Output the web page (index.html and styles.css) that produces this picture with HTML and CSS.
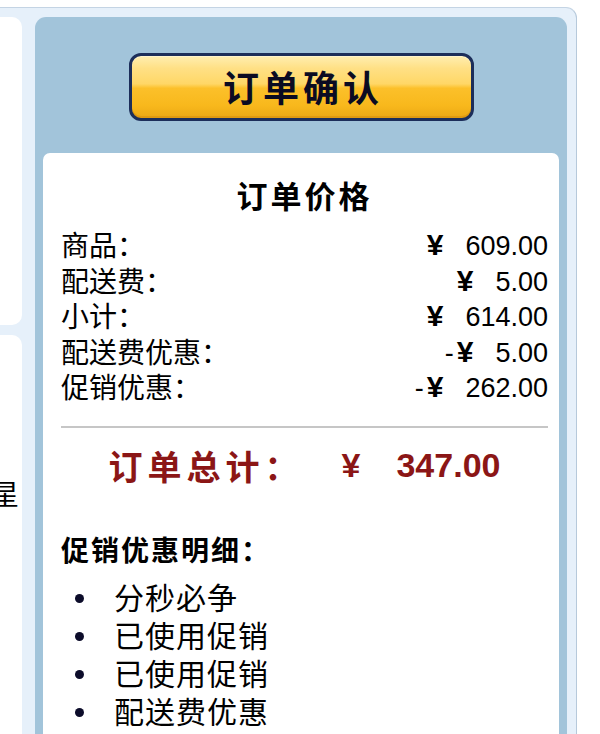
FILE: index.html
```html
<!DOCTYPE html>
<html lang="zh-CN">
<head>
<meta charset="utf-8">
<title>订单确认</title>
<link rel="stylesheet" href="styles.css">
</head>
<body>
<div class="frame">
  <div class="side">
    <div class="side-panel side-top"></div>
    <div class="side-panel side-bottom"><span class="cut">星</span></div>
  </div>
  <div class="panel">
    <div class="btn-row"><button class="confirm" type="button">订单确认</button></div>
    <div class="card">
      <h2 class="title">订单价格</h2>
      <div class="rows">
        <div class="row"><span class="label">商品：</span><span class="val"><span class="yen">¥</span>609.00</span></div>
        <div class="row"><span class="label">配送费：</span><span class="val"><span class="yen">¥</span>5.00</span></div>
        <div class="row"><span class="label">小计：</span><span class="val"><span class="yen">¥</span>614.00</span></div>
        <div class="row"><span class="label">配送费优惠：</span><span class="val">-<span class="yen yen-neg">¥</span>5.00</span></div>
        <div class="row"><span class="label">促销优惠：</span><span class="val">-<span class="yen yen-neg">¥</span>262.00</span></div>
      </div>
      <hr class="divider">
      <div class="total">
        <span class="total-label">订单总计：</span>
        <span class="total-yen">¥</span>
        <span class="total-num">347.00</span>
      </div>
      <h3 class="promo-head">促销优惠明细：</h3>
      <ul class="promo-list">
        <li>分秒必争</li>
        <li>已使用促销</li>
        <li>已使用促销</li>
        <li>配送费优惠</li>
      </ul>
    </div>
  </div>
</div>
</body>
</html>
```

FILE: styles.css
```css
html, body {
  margin: 0;
  padding: 0;
  background: #ffffff;
}

body {
  font-family: "Noto Sans CJK SC", "Liberation Sans", sans-serif;
  color: #000000;
  height: 734px;
  overflow: hidden;
}

.frame {
  margin-top: 7px;
  width: 577px;
  min-height: 800px;
  box-sizing: border-box;
  display: flex;
  gap: 13px;
  padding: 9px 9px 0 0;
  background: #e6f0fa;
  border-top: 1px solid #c4d4e4;
  border-right: 1px solid #b6c9db;
  border-top-right-radius: 11px;
}

.side {
  width: 22px;
  flex: none;
  display: flex;
  flex-direction: column;
  gap: 10px;
}

.side-panel {
  background: #ffffff;
}

.side-top {
  height: 308px;
  border-radius: 0 10px 10px 0;
}

.side-bottom {
  flex: 1;
  border-radius: 0 10px 0 0;
  display: flex;
  justify-content: flex-end;
  align-items: flex-start;
  padding: 140px 3px 0 0;
  overflow: hidden;
  font-size: 28px;
  line-height: 36px;
}

.cut {
  flex: none;
}

.panel {
  width: 532px;
  flex: none;
  box-sizing: border-box;
  background: #a2c4da;
  border-radius: 11px 11px 0 0;
  padding: 36px 8px 0;
  display: flex;
  flex-direction: column;
}

.btn-row {
  display: flex;
  justify-content: center;
}

.confirm {
  width: 345px;
  height: 68px;
  box-sizing: border-box;
  border: 3px solid #1c2e5a;
  border-radius: 12px;
  background: linear-gradient(to bottom, #ffeeb0 0%, #ffe085 20%, #ffd766 45%, #fcc02a 52%, #f8b81c 80%, #eca814 100%);
  box-shadow: inset 0 1px 0 #fff4cc, inset 0 -2px 0 #e09a10;
  font-family: "Noto Sans CJK SC", sans-serif;
  font-weight: 700;
  font-size: 36px;
  line-height: 1;
  letter-spacing: 4px;
  padding: 0 0 2px 4px;
  color: #0b0b22;
}

.card {
  margin-top: 32px;
  flex: 1;
  background: #ffffff;
  border-radius: 7px 7px 0 0;
  padding: 22px 11px 40px 18px;
}

.title {
  margin: 0;
  font-size: 31px;
  font-weight: 700;
  line-height: 40px;
  text-align: center;
  letter-spacing: 3px;
}

.rows {
  margin-top: 12px;
}

.row {
  display: flex;
  justify-content: space-between;
  height: 35.5px;
  line-height: 35.5px;
  font-size: 28px;
}

.val {
  font-family: "Liberation Sans", sans-serif;
  font-size: 27px;
}

.yen {
  font-weight: 700;
  font-size: 30px;
  margin-right: 22px;
}

.yen-neg {
  margin-left: 3px;
}

.divider {
  margin: 21px 0 0;
  border: 0;
  height: 2px;
  background: #c6c6c6;
}

.total {
  margin-top: 13px;
  height: 50px;
  display: flex;
  justify-content: center;
  align-items: center;
  color: #8b1616;
  font-weight: 700;
}

.total-label {
  font-size: 34px;
  line-height: 50px;
  letter-spacing: 5px;
}

.total-yen {
  font-family: "Liberation Sans", sans-serif;
  font-size: 34px;
  margin-left: 38px;
}

.total-num {
  font-family: "Liberation Sans", sans-serif;
  font-size: 34px;
  margin-left: 36px;
}

.promo-head {
  margin: 40px 0 0;
  font-size: 28px;
  font-weight: 700;
  line-height: 36px;
  letter-spacing: 2px;
}

.promo-list {
  list-style: none;
  margin: 10px 0 0;
  padding: 0 0 0 14px;
}

.promo-list li {
  display: flex;
  align-items: center;
  height: 38px;
  line-height: 38px;
  font-size: 30px;
  letter-spacing: 1px;
}

.promo-list li::before {
  content: "";
  flex: none;
  width: 9px;
  height: 9px;
  border-radius: 50%;
  background: #0c0c2a;
  margin-right: 30px;
  margin-top: 6px;
}
```
